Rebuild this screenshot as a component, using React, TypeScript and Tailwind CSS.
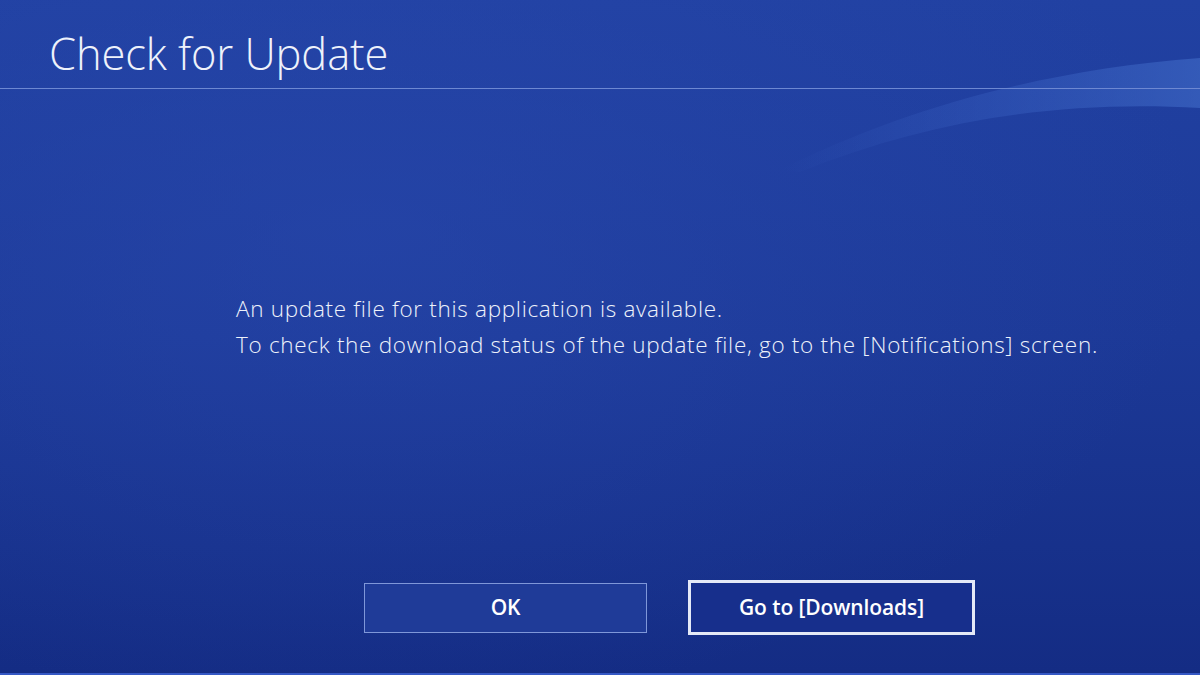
import React from "react";

const FONT = "font-['Open_Sans','Noto_Sans',sans-serif]";

function Wave() {
  return (
    <svg className="pointer-events-none absolute inset-0" width="1200" height="675" viewBox="0 0 1200 675">
      <defs>
        <linearGradient id="wv" x1="0" y1="0" x2="1" y2="0">
          <stop offset="0" stopColor="#3b63c4" stopOpacity="0" />
          <stop offset="0.5" stopColor="#3b63c4" stopOpacity="0.35" />
          <stop offset="1" stopColor="#4470cc" stopOpacity="0.55" />
        </linearGradient>
        <radialGradient id="glow" cx="0.3" cy="0.35" r="0.7">
          <stop offset="0" stopColor="#2a4ab0" stopOpacity="0.5" />
          <stop offset="1" stopColor="#2a4ab0" stopOpacity="0" />
        </radialGradient>
      </defs>
      <rect x="0" y="0" width="1200" height="675" fill="url(#glow)" />
      <path
        d="M780 170 C900 110 1040 70 1200 58 L1200 108 C1060 100 930 120 800 172 Z"
        fill="url(#wv)"
      />
    </svg>
  );
}

export default function App() {
  return (
    <div className="relative h-[675px] w-[1200px] overflow-hidden border-b-2 border-[#3558c4] bg-gradient-to-b from-[#2141a2] via-[#1c3997] to-[#142c84] text-[#eef2fb]">
      <Wave />
      <div className="relative flex h-full flex-col">
        <header className="h-[89px] border-b border-[#6d88d2]">
          <h1 className={`${FONT} pl-[49px] pt-[24px] text-[43.5px] font-light leading-[60px] tracking-[-0.1px]`}>
            Check for Update
          </h1>
        </header>

        <div className={`${FONT} mt-[202px] pl-[236px] text-[22.5px] font-light leading-[36px] tracking-[0.7px]`}>
          <p>An update file for this application is available.</p>
          <p>To check the download status of the update file, go to the [Notifications] screen.</p>
        </div>

        <div className="mt-[217px] flex items-center gap-[41px] pl-[364px]">
          <button className="flex h-[50px] w-[283px] items-center justify-center border border-[#7f97d9] bg-[#1f3b98]">
            <span className={`${FONT} text-[21px] font-semibold tracking-[-0.1px] text-white`}>OK</span>
          </button>
          <button className="flex h-[55px] w-[287px] items-center justify-center border-[3px] border-[#e4e9f7] bg-[#172f8c]">
            <span className={`${FONT} text-[21px] font-semibold tracking-[-0.1px] text-white`}>Go to [Downloads]</span>
          </button>
        </div>
      </div>
    </div>
  );
}
